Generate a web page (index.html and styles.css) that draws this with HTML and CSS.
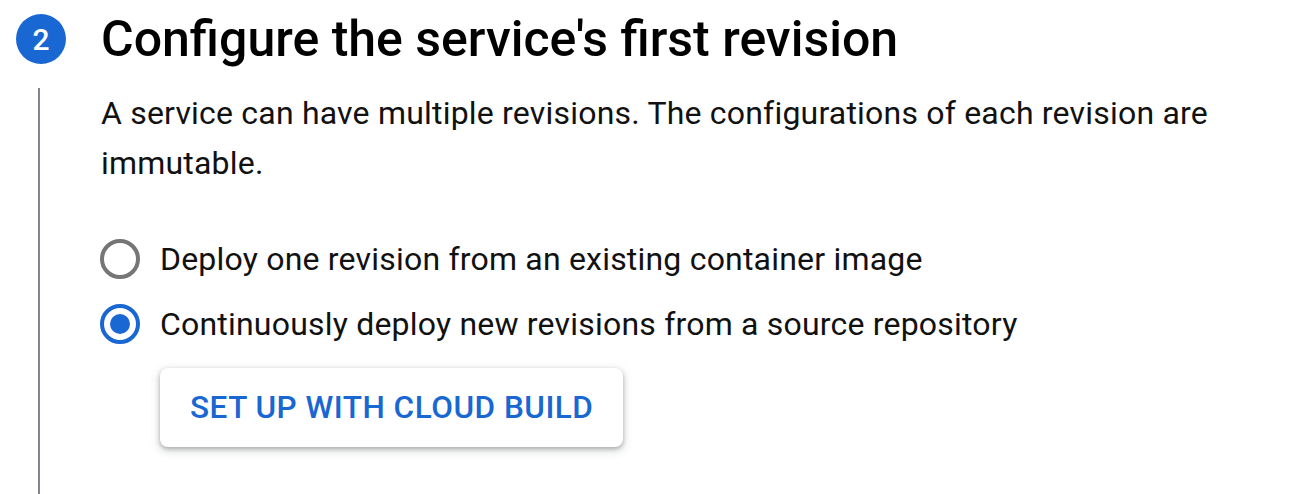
FILE: index.html
```html
<!DOCTYPE html>
<html>
<head>
<meta charset="utf-8">
<link rel="stylesheet" href="styles.css">
</head>
<body>
<div class="step">
  <div class="step-head">
    <div class="badge">2</div>
    <h1 class="title">Configure the service's first revision</h1>
  </div>
  <div class="step-body">
    <div class="rail"></div>
    <div class="content">
      <p class="desc">A service can have multiple revisions. The configurations of each revision are immutable.</p>
      <div class="radios">
        <label class="radio">
          <span class="dot"></span>
          <span class="radio-label">Deploy one revision from an existing container image</span>
        </label>
        <label class="radio checked">
          <span class="dot"></span>
          <span class="radio-label">Continuously deploy new revisions from a source repository</span>
        </label>
      </div>
      <button class="btn">SET UP WITH CLOUD BUILD</button>
    </div>
  </div>
</div>
</body>
</html>
```
FILE: styles.css
```css
* { box-sizing: border-box; }
html, body { margin: 0; padding: 0; background: #fff; }
body {
  font-family: Roboto, "Liberation Sans", sans-serif;
  color: #000;
  width: 1312px;
  height: 494px;
  overflow: hidden;
}
.step { padding: 14px 0 0 16px; }
.step-head {
  display: flex;
  align-items: center;
  gap: 35px;
  height: 50px;
}
.badge {
  width: 50px;
  height: 50px;
  border-radius: 50%;
  background: #1967d2;
  color: #fff;
  font-size: 30px;
  font-weight: 500;
  display: flex;
  align-items: center;
  justify-content: center;
  flex: none;
}
.title {
  margin: 0;
  font-size: 50px;
  font-weight: 500;
  color: #000;
  line-height: 50px;
}
.step-body {
  display: flex;
  margin-top: 24px;
}
.rail {
  width: 2px;
  background: #80868b;
  margin-left: 22px;
  flex: none;
  height: 420px;
}
.content {
  padding-left: 60px;
}
.desc {
  margin: 0 0 0 1px;
  font-size: 32px;
  letter-spacing: 0.2px;
  line-height: 50px;
  color: #111;
  width: 1150px;
}
.radios {
  margin-top: 51px;
  display: flex;
  flex-direction: column;
  gap: 25px;
}
.radio {
  display: flex;
  align-items: center;
  gap: 20px;
  height: 40px;
  font-size: 32px;
  letter-spacing: 0.2px;
  color: #111;
}
.dot {
  width: 40px;
  height: 40px;
  border-radius: 50%;
  border: 4px solid #757575;
  flex: none;
  position: relative;
}
.radio.checked .dot { border-color: #1967d2; }
.radio.checked .dot::after {
  content: "";
  position: absolute;
  left: 6px; top: 6px;
  width: 20px; height: 20px;
  border-radius: 50%;
  background: #1967d2;
}
.btn {
  margin-top: 24px;
  margin-left: 60px;
  height: 79px;
  padding: 0 30px;
  border: none;
  border-radius: 8px;
  background: #fff;
  color: #1967d2;
  font-family: Roboto, "Liberation Sans", sans-serif;
  font-size: 31.5px;
  font-weight: 500;
  letter-spacing: 0.5px;
  box-shadow: 0 2px 4px rgba(60,64,67,0.35), 0 3px 8px 2px rgba(60,64,67,0.15);
}
```
